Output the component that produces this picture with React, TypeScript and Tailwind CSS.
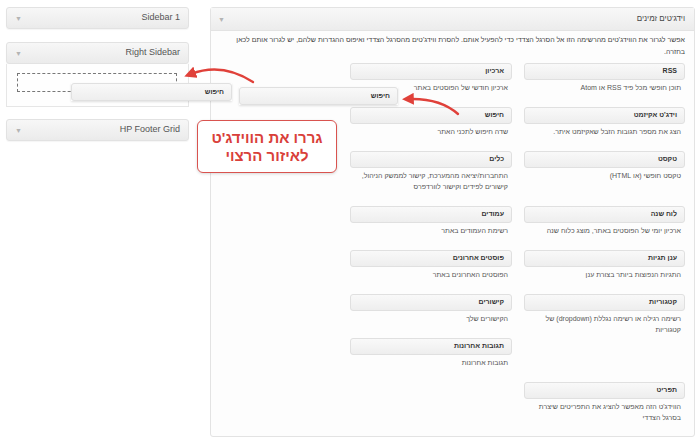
import React from "react";

type Widget = { title: string; desc: string; span?: boolean };

// right column first (RTL grid), then left, row by row
const widgets: Widget[] = [
  { title: "RSS", desc: "תוכן חופשי מכל פיד RSS או Atom" },
  { title: "ארכיון", desc: "ארכיון חודשי של הפוסטים באתר" },
  { title: "וידג'ט אקיזמט", desc: "הצג את מספר תגובות הזבל שאקיזמט איתר." },
  { title: "חיפוש", desc: "שדה חיפוש לתכני האתר" },
  { title: "טקסט", desc: "טקסט חופשי (או HTML)" },
  {
    title: "כלים",
    desc: "התחברות/יציאה מהמערכת, קישור לממשק הניהול, קישורים לפידים וקישור לוורדפרס",
  },
  { title: "לוח שנה", desc: "ארכיון יומי של הפוסטים באתר, מוצג כלוח שנה" },
  { title: "עמודים", desc: "רשימת העמודים באתר" },
  { title: "ענן תגיות", desc: "התגיות הנפוצות ביותר בצורת ענן" },
  { title: "פוסטים אחרונים", desc: "הפוסטים האחרונים באתר" },
  { title: "קטגוריות", desc: "רשימה רגילה או רשימה נגללת (dropdown) של קטגוריות", span: true },
  { title: "קישורים", desc: "הקישורים שלך" },
  { title: "תגובות אחרונות", desc: "תגובות אחרונות" },
  { title: "תפריט", desc: "הווידג'ט הזה מאפשר להציג את התפריטים שיצרת בסרגל הצדדי" },
];

const font = { fontFamily: '"Liberation Sans", Arial, sans-serif' };

function Caret() {
  return <span className="text-[7px] leading-none text-[#b4b4b4]">▼</span>;
}

function SidebarHeader({ title }: { title: string }) {
  return (
    <div className="h-[22px] flex items-center justify-between px-[8px] bg-gradient-to-b from-[#f7f7f7] to-[#ebebeb] border border-[#e2e2e2] rounded-[3px] shadow-[0_1px_1px_rgba(0,0,0,0.04)]">
      <Caret />
      <span className="text-[9px] text-[#555]">{title}</span>
    </div>
  );
}

function WidgetBox({ title, className = "" }: { title: string; className?: string }) {
  return (
    <div
      className={`h-[17px] flex items-center px-[7px] bg-gradient-to-b from-[#f9f9f9] to-[#eeeeee] border border-[#e0e0e0] rounded-[3px] ${className}`}
    >
      <span className="text-[7px] font-bold text-[#333]">{title}</span>
    </div>
  );
}

export default function App() {
  return (
    <div className="relative w-[700px] h-[443px] bg-white overflow-hidden" style={font}>
      <div className="flex items-start pt-[7px] pl-[6px]">
        {/* Sidebars */}
        <div className="w-[183px] flex flex-col">
          <SidebarHeader title="Sidebar 1" />
          <div className="mt-[13px]">
            <SidebarHeader title="Right Sidebar" />
            <div className="h-[43px] border border-t-0 border-[#e6e6e6] bg-[#fefefe] pt-[9px] pl-[10px] pr-[11px]">
              <div className="h-[19px] border border-dashed border-[#777]" />
            </div>
          </div>
          <div className="mt-[12px]">
            <SidebarHeader title="HP Footer Grid" />
          </div>
        </div>

        {/* Available widgets */}
        <div
          dir="rtl"
          className="ml-[21px] w-[485px] h-[430px] border border-[#e3e3e3] rounded-[3px] bg-[#fdfdfd]"
        >
          <div className="h-[23px] flex items-center justify-between pr-[9px] pl-[7px] bg-gradient-to-b from-[#f8f8f8] to-[#ececec] border-b border-[#e3e3e3]">
            <span className="text-[8px] text-[#464646]">וידג'טים זמינים</span>
            <Caret />
          </div>
          <p className="px-[9px] pt-[3px] text-[7px] leading-[12px] text-[#444]">
            אפשר לגרור את הווידג'טים מהרשימה הזו אל הסרגל הצדדי כדי להפעיל אותם. להסרת ווידג'טים מהסרגל הצדדי ואיפוס ההגדרות שלהם, יש לגרור אותם לכאן בחזרה.
          </p>
          <div className="mt-[5px] pr-[9px] grid grid-cols-[161px_162px] gap-x-[12px]">
            {widgets.map((w) => (
              <div key={w.title} className={w.span ? "row-span-2" : ""}>
                <WidgetBox title={w.title} />
                <p className="mt-[2px] mb-[14px] pr-[4px] text-[7px] leading-[11px] text-[#555]">{w.desc}</p>
              </div>
            ))}
          </div>
        </div>
      </div>

      {/* dragged widgets */}
      <div dir="rtl" className="absolute left-[71px] top-[83px] w-[161px] shadow-[0_1px_2px_rgba(0,0,0,0.12)]">
        <WidgetBox title="חיפוש" className="h-[18px]" />
      </div>
      <div dir="rtl" className="absolute left-[239px] top-[87px] w-[159px] shadow-[0_1px_2px_rgba(0,0,0,0.12)]">
        <WidgetBox title="חיפוש" className="h-[18px]" />
      </div>

      {/* arrows */}
      <svg className="absolute left-0 top-0 pointer-events-none" width="700" height="443" viewBox="0 0 700 443">
        <defs>
          <marker id="head" markerWidth="5" markerHeight="5" refX="2" refY="2.5" orient="auto">
            <path d="M0,0 L5,2.5 L0,5 Z" fill="#e0413a" />
          </marker>
        </defs>
        <path d="M253 82 Q222 62 191 74" fill="none" stroke="#e0413a" strokeWidth="2.4" strokeLinecap="round" markerEnd="url(#head)" />
        <path d="M458 114 Q440 98 409 99" fill="none" stroke="#e0413a" strokeWidth="2.4" strokeLinecap="round" markerEnd="url(#head)" />
      </svg>

      {/* callout */}
      <div
        dir="rtl"
        className="absolute left-[197px] top-[120px] w-[140px] h-[53px] flex flex-col items-center justify-center bg-white border border-[#d9534f] rounded-[6px] shadow-[0_1px_3px_rgba(0,0,0,0.15)]"
      >
        <span className="text-[15px] font-bold leading-[18px] text-[#d9403a]">גררו את הווידג'ט</span>
        <span className="text-[15px] font-bold leading-[18px] text-[#d9403a]">לאיזור הרצוי</span>
      </div>
    </div>
  );
}
